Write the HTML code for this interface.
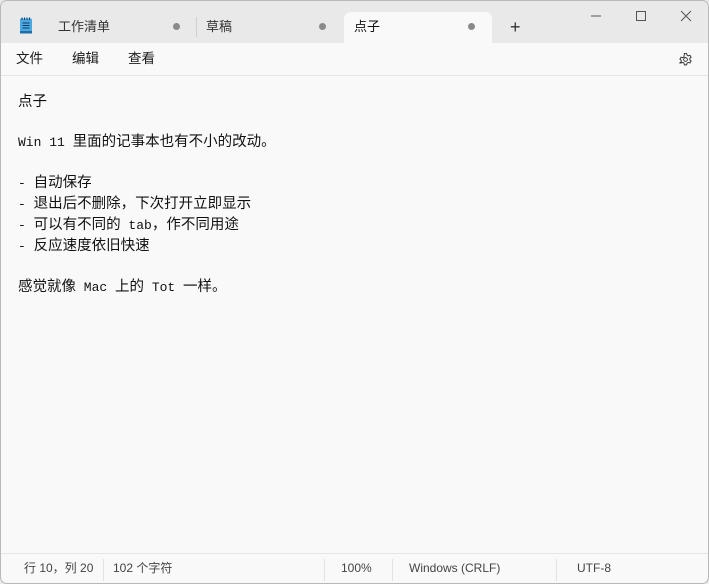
<!DOCTYPE html>
<html><head><meta charset="utf-8"><style>
*{margin:0;padding:0;box-sizing:border-box}
body{width:709px;height:584px;overflow:hidden;background:#e9e9e9;font-family:"Liberation Sans","Noto Sans CJK SC",sans-serif;position:relative;color:#1a1a1a}
.win{position:absolute;left:0;top:0;width:709px;height:584px;border:1px solid #b8b8b8;border-radius:7px;overflow:hidden;background:#f9f9f9}
.tabbar{position:absolute;left:0;top:0;width:100%;height:42px;background:#e9e9e9}
.tab{position:absolute;top:11px;height:31px;font-size:13px;line-height:29px;color:#333}
.dot{position:absolute;width:7px;height:7px;border-radius:50%;background:#8a8a8a;top:11px}
.active{background:#f9f9f9;border-radius:7px 7px 0 0}
.sep{position:absolute;width:1px;background:#d0d0d0}
.menu{position:absolute;top:42px;left:0;width:100%;height:33px;border-bottom:1px solid #e5e5e5;font-size:13.5px}
.menu span{position:absolute;top:7px;line-height:18px}
.ed{position:absolute;left:17px;top:91px;font-size:14.5px;line-height:20px;font-family:"Liberation Sans","Noto Sans CJK SC",sans-serif;color:#111;white-space:pre}
.m{font-family:"Liberation Mono",monospace;font-size:13px}
.status{position:absolute;left:0;top:552px;width:100%;height:32px;border-top:1px solid #e5e5e5;font-size:12px;color:#444}
.status span{position:absolute;top:6px;line-height:16px}
.status i{position:absolute;top:5px;height:22px;width:1px;background:#e2e2e2}
</style></head><body>
<div class="win">
<div class="tabbar">
 <svg style="position:absolute;left:18px;top:16px" width="14" height="18" viewBox="0 0 14 18"><rect x="1" y="1.5" width="12" height="15" rx="1.5" fill="#4aa9e0"/><rect x="1" y="14" width="12" height="2.5" fill="#1e6fa8"/><path d="M3.5 6h7M3.5 8.5h7M3.5 11h7" stroke="#133d66" stroke-width="1"/><path d="M3 0.5v2.5M5.5 0.5v2.5M8 0.5v2.5M10.5 0.5v2.5" stroke="#133d66" stroke-width="1"/></svg>
 <div class="tab" style="left:57px">工作清单</div>
 <div class="dot" style="left:172px;top:22px"></div>
 <div class="sep" style="left:195px;top:16px;height:20px"></div>
 <div class="tab" style="left:205px">草稿</div>
 <div class="dot" style="left:318px;top:22px"></div>
 <div class="tab active" style="left:343px;width:148px"><span style="position:absolute;left:10px;color:#111">点子</span><div class="dot" style="left:124px"></div></div>
 <div style="position:absolute;left:509px;top:16px;font-size:18px;color:#333;font-weight:300">+</div>
 <svg style="position:absolute;left:585px;top:8px" width="110" height="14"><path d="M5 7h10" stroke="#555"/><rect x="50.5" y="2.5" width="9" height="9" fill="none" stroke="#555"/><path d="M95 2l10 10M105 2l-10 10" stroke="#555"/></svg>
</div>
<div class="menu"><span style="left:15px">文件</span><span style="left:71px">编辑</span><span style="left:127px">查看</span>
 <svg style="position:absolute;left:677px;top:9px" width="15" height="15" viewBox="0 0 16 16"><circle cx="8" cy="8" r="2" fill="none" stroke="#333"/><path d="M6.8 1.5h2.4l.4 1.8 1.4.8 1.8-.6 1.2 2.1-1.4 1.2v1.6l1.4 1.2-1.2 2.1-1.8-.6-1.4.8-.4 1.8H6.8l-.4-1.8-1.4-.8-1.8.6L2 11.6l1.4-1.2V8.8L2 7.6l1.2-2.1 1.8.6 1.4-.8z" fill="none" stroke="#333" stroke-width="1"/></svg>
</div>
<div class="ed">点子

<span class="m">Win 11 </span>里面的记事本也有不小的改动。

<span class="m">- </span>自动保存
<span class="m">- </span>退出后不删除，下次打开立即显示
<span class="m">- </span>可以有不同的<span class="m"> tab</span>，作不同用途
<span class="m">- </span>反应速度依旧快速

感觉就像<span class="m"> Mac </span>上的<span class="m"> Tot </span>一样。</div>
<div class="status">
 <span style="left:23px">行 10，列 20</span><i style="left:102px"></i>
 <span style="left:112px">102 个字符</span><i style="left:323px"></i>
 <span style="left:340px">100%</span><i style="left:391px"></i>
 <span style="left:408px">Windows (CRLF)</span><i style="left:555px"></i>
 <span style="left:576px">UTF-8</span>
</div>
</div>
</body></html>
